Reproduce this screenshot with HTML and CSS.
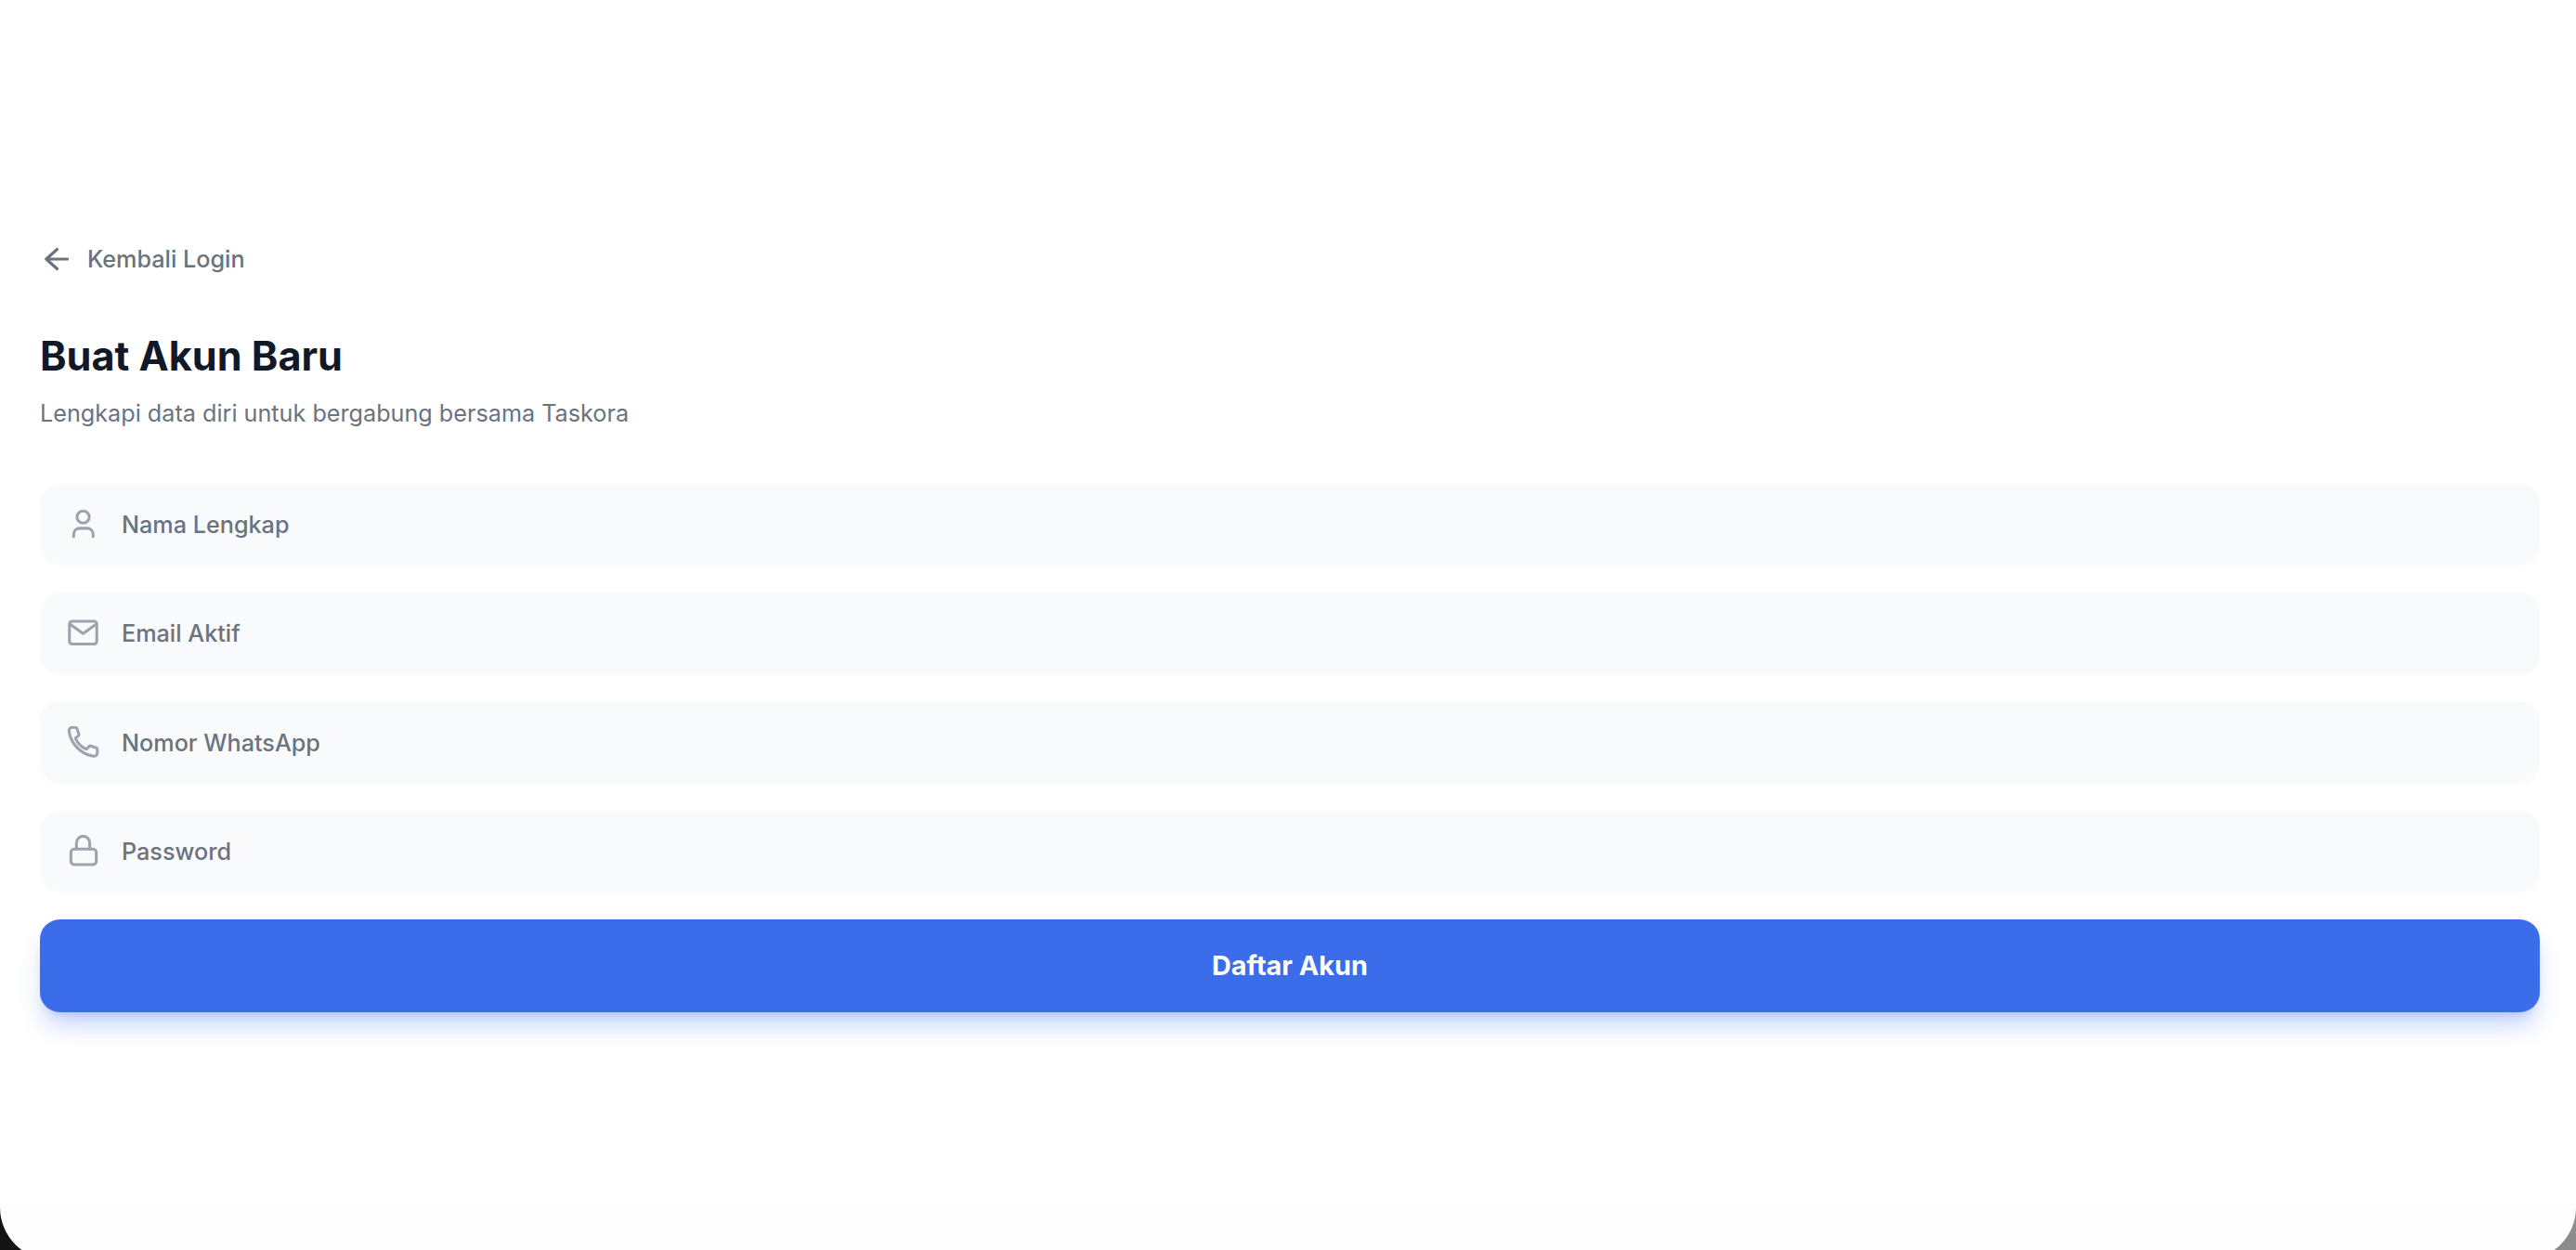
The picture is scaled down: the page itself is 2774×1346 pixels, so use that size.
FILE: index.html
```html
<!DOCTYPE html>
<html lang="id">
<head>
  <meta charset="UTF-8">
  <meta name="viewport" content="width=device-width, initial-scale=1.0">
  <title>Buat Akun Baru</title>
  <link rel="stylesheet" href="styles.css">
</head>

<body>
  <main class="screen">
    <a class="back-link" href="#">
      <svg class="back-icon" viewBox="0 0 26 26" fill="none" stroke="currentColor" stroke-width="3.200" stroke-linecap="round" stroke-linejoin="round">
        <path d="M13.500 2.500 1.800 13l11.700 10.500M1.800 13h22.700"/>
      </svg>
      <span>Kembali Login</span>
    </a>

    <h1 class="title">Buat Akun Baru</h1>
    <p class="subtitle">Lengkapi data diri untuk bergabung bersama Taskora</p>

    <form class="register-form">
      <label class="field">
        <svg class="field-icon" viewBox="0 0 24 24" fill="none" stroke="currentColor" stroke-width="2.100" stroke-linecap="round" stroke-linejoin="round">
          <circle cx="12" cy="6" r="4.500"/>
          <path d="M5 20.400v-1.700a4.400 4.400 0 0 1 4.400-4.400h5.600a4.400 4.400 0 0 1 4.400 4.400v1.700"/>
        </svg>
        <input class="field-input" type="text" placeholder="Nama Lengkap">
      </label>

      <label class="field">
        <svg class="field-icon" viewBox="0 0 24 24" fill="none" stroke="currentColor" stroke-width="2.100" stroke-linecap="round" stroke-linejoin="round">
          <rect x="1.900" y="2.700" width="20.200" height="16.800" rx="2"/>
          <path d="M2.500 5 12 11.800 21.500 5"/>
        </svg>
        <input class="field-input" type="email" placeholder="Email Aktif">
      </label>

      <label class="field">
        <svg class="field-icon" viewBox="0 0 24 24" fill="none" stroke="currentColor" stroke-width="2.100" stroke-linecap="round" stroke-linejoin="round">
          <path transform="translate(0 -.7)" d="M3.800 1.600h2.500c.6 0 1 .4 1.200.9l1.300 3.900c.2.500 0 1-.4 1.400L6.300 9.500c1.400 3.300 4.700 6.700 8.200 8.200l1.800-2c.4-.4.900-.6 1.400-.4l3.900 1.300c.5.200.9.600.9 1.200v2.500c0 1.500-1.200 2.700-2.700 2.500C10.300 21.300 2.800 13.700 1.600 4.300c-.2-1.500 1-2.700 2.200-2.700z"/>
        </svg>
        <input class="field-input" type="tel" placeholder="Nomor WhatsApp">
      </label>

      <label class="field">
        <svg class="field-icon" viewBox="0 0 24 24" fill="none" stroke="currentColor" stroke-width="2.100" stroke-linecap="round" stroke-linejoin="round">
          <rect x="3" y="10.500" width="18.700" height="11.500" rx="2.500"/>
          <path d="M7.100 10.500V5.900a4.900 4.900 0 0 1 9.800 0v4.600"/>
        </svg>
        <input class="field-input" type="password" placeholder="Password">
      </label>

      <button class="submit-btn" type="button">Daftar Akun</button>
    </form>
  </main>
</body>
</html>
```

FILE: styles.css
```css
* {
  box-sizing: border-box;
}

html {
  height: 100%;
  background: linear-gradient(to right, #141414 0%, #141414 50%, #8c8c8c 100%);
}

body {
  margin: 0;
  height: 100%;
  overflow: hidden;
  font-family: Inter, "Liberation Sans", sans-serif;
}

.screen {
  height: calc(100vh + 11px);
  padding: 261px 39px 0 43px;
  background: linear-gradient(to bottom, #fff 94%, #fdfdfd 100%);
  border-radius: 0 0 57px 57px;
}

.back-link {
  display: flex;
  align-items: center;
  gap: 20px;
  height: 36px;
  padding-left: 5px;
  color: #6b7280;
  font-size: 25.200px;
  font-weight: 500;
  text-decoration: none;
}

.back-icon {
  width: 26px;
  height: 26px;
}

.title {
  margin: 56px 0 0;
  color: #111827;
  font-size: 43.200px;
  font-weight: 700;
  line-height: 60px;
}

.subtitle {
  margin: 14px 0 0;
  color: #6b7280;
  font-size: 25.200px;
  line-height: 36px;
}

.register-form {
  display: flex;
  flex-direction: column;
  gap: 28.700px;
  margin-top: 57.800px;
}

.field {
  display: flex;
  align-items: center;
  height: 88.600px;
  padding-left: 73px;
  position: relative;
  background-color: #f9fafb;
  border-radius: 21.600px;
}

.field-icon {
  position: absolute;
  left: 29px;
  top: 50%;
  width: 35px;
  height: 35px;
  margin-top: -17.500px;
  color: #9ca3af;
}

.field-input {
  flex: 1;
  padding: 0 15px;
  border: none;
  outline: none;
  background: transparent;
  color: #111827;
  font-family: inherit;
  font-size: 25.200px;
  font-weight: 500;
}

.field-input::placeholder {
  color: #6b7280;
  opacity: 1;
}

.submit-btn {
  height: 100px;
  border: none;
  border-radius: 21.600px;
  background-color: #3b6cea;
  color: #fff;
  font-family: inherit;
  font-size: 28.800px;
  font-weight: 700;
  cursor: pointer;
  box-shadow: 0 18px 27px -5px rgba(59, 108, 234, 0.3), 0 7px 11px -7px rgba(59, 108, 234, 0.3);
}
```
